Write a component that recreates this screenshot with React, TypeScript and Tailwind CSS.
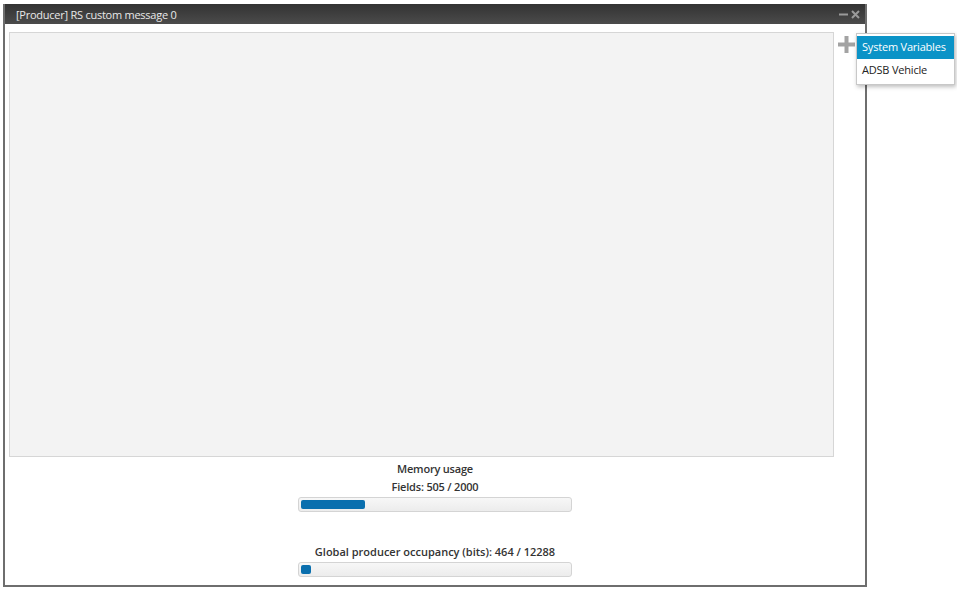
import React from 'react';

const fields = { used: 505, total: 2000 };
const bits = { used: 464, total: 12288 };

const UsageBar: React.FC<{ used: number; total: number }> = ({ used, total }) => {
  const pct = Math.max(1.5, (used / total) * 94);
  return (
    <div className="w-[274px] h-[15px] rounded-[3px] border border-[#d4d4d4] bg-gradient-to-b from-[#f7f7f7] to-[#ececec] p-[2px]">
      <div className="h-full rounded-[2px] bg-[#0a6fae]" style={{ width: `${pct}%` }} />
    </div>
  );
};

export default function App() {
  return (
    <div
      className="relative w-[957px] h-[589px] bg-white text-[11px] text-[#333]"
      style={{ fontFamily: '"Open Sans", "Noto Sans", sans-serif' }}
    >
      <div className="absolute left-[3px] top-[4px] w-[864px] h-[583px] flex flex-col border-2 border-t-0 border-[#6e6e6e] bg-white">
        {/* title bar */}
        <div className="h-[20px] shrink-0 flex items-center justify-between bg-gradient-to-b from-[#333333] to-[#4b4b4b] pl-[11px] pr-[5px]">
          <span className="text-[11px] text-[#e8e8e8] leading-none tracking-[-0.25px]">[Producer] RS custom message 0</span>
          <div className="flex items-center gap-[3px] text-[#9a9a9a]">
            <svg width="9" height="9" viewBox="0 0 9 9">
              <rect x="0" y="3.5" width="9" height="2" fill="currentColor" />
            </svg>
            <svg width="9" height="9" viewBox="0 0 9 9">
              <path d="M1 1 L8 8 M8 1 L1 8" stroke="currentColor" strokeWidth="2" />
            </svg>
          </div>
        </div>

        {/* body */}
        <div className="flex-1 flex flex-col">
          <div className="flex pt-[8px] pl-[4px]">
            <div className="w-[825px] h-[425px] bg-[#f3f3f3] border border-[#d6d6d6]" />
            <button className="ml-[3px] mt-[3px] w-[18px] h-[18px] flex items-center justify-center text-[#a3a3a3]">
              <svg width="17" height="17" viewBox="0 0 17 17">
                <rect x="6.5" y="0" width="4" height="17" fill="currentColor" />
                <rect x="0" y="6.5" width="17" height="4" fill="currentColor" />
              </svg>
            </button>
          </div>

          <div className="flex flex-col items-center pt-[3px]">
            <div className="font-semibold leading-[18px] tracking-[-0.2px]">Memory usage</div>
            <div className="font-semibold leading-[18px] tracking-[-0.2px]">Fields: {fields.used} / {fields.total}</div>
            <div className="mt-[1px]">
              <UsageBar used={fields.used} total={fields.total} />
            </div>
            <div className="mt-[31px] font-semibold leading-[18px]">
              Global producer occupancy (bits): {bits.used} / {bits.total}
            </div>
            <div className="mt-[1px]">
              <UsageBar used={bits.used} total={bits.total} />
            </div>
          </div>
        </div>
      </div>

      {/* add-source menu */}
      <div className="absolute left-[856px] top-[33px] w-[99px] bg-white border border-[#c8c8c8] shadow-[1px_2px_4px_rgba(0,0,0,0.25)] py-[2px]">
        <div className="h-[23px] px-[5px] flex items-center bg-[#0b93c7] text-white tracking-[-0.2px]">System Variables</div>
        <div className="h-[23px] px-[5px] flex items-center text-[#222] tracking-[-0.2px]">ADSB Vehicle</div>
      </div>
    </div>
  );
}
